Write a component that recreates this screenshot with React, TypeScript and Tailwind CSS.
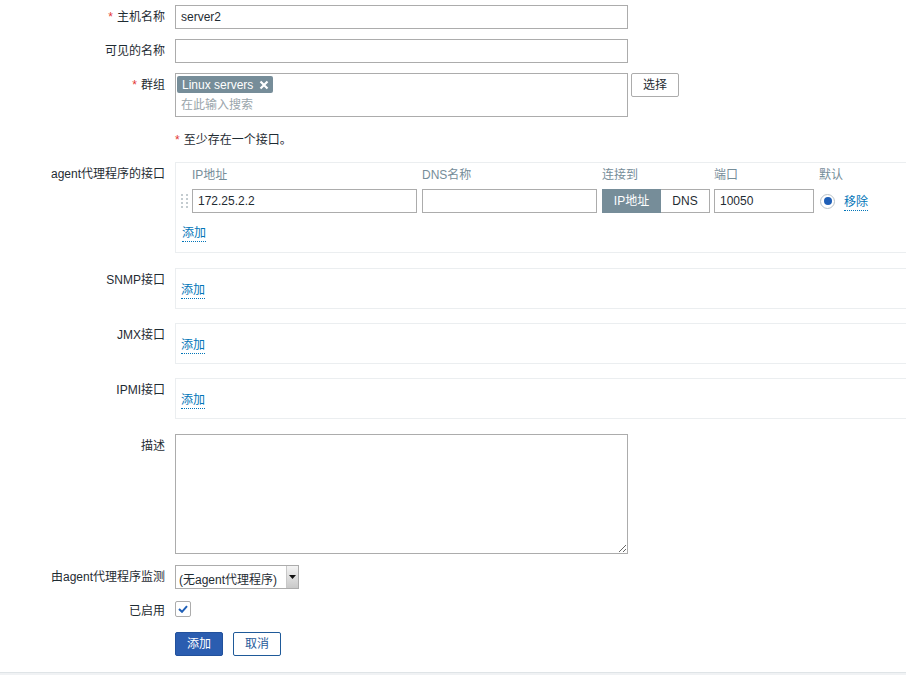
import { ReactNode } from 'react'

const font = { fontFamily: '"Liberation Sans", Arial, "Noto Sans CJK SC", sans-serif' }

function Req() {
  return <span className="mr-[4px] text-[#e33734]">*</span>
}

function Row({
  label,
  required,
  className,
  labelClass,
  children,
}: {
  label?: ReactNode
  required?: boolean
  className?: string
  labelClass?: string
  children: ReactNode
}) {
  return (
    <div className={`flex items-start ${className ?? ''}`}>
      <div
        className={`w-[165px] shrink-0 text-right text-[12px] leading-[14px] text-[#1f2c33] ${labelClass ?? 'pt-[5px]'}`}
      >
        {required && <Req />}
        {label}
      </div>
      <div className="ml-[10px] min-w-0">{children}</div>
    </div>
  )
}

function AddLink({ children = '添加' }: { children?: ReactNode }) {
  return (
    <span className="border-b border-dotted border-[#0275b8] pb-[1px] text-[12px] leading-[14px] text-[#0275b8]">
      {children}
    </span>
  )
}

function TextInput({ value, w }: { value?: string; w: string }) {
  return (
    <div
      className={`${w} flex h-[24px] items-center border border-[#acacac] bg-white px-[5px] text-[12px] text-[#1f2c33]`}
    >
      {value}
    </div>
  )
}

function DragHandle() {
  return (
    <div className="grid w-[7px] grid-cols-2 gap-x-[3px] gap-y-[2px]">
      {Array.from({ length: 8 }).map((_, i) => (
        <span key={i} className="h-[2px] w-[2px] bg-[#c4ccd0]" />
      ))}
    </div>
  )
}

function EmptyBox() {
  return (
    <div className="h-[41px] w-[740px] border border-[#ebeef0] pl-[5px] pt-[8px]">
      <AddLink />
    </div>
  )
}

export default function App() {
  return (
    <div className="min-h-[675px] w-full overflow-hidden bg-white" style={font}>
      <div className="flex flex-col pt-[5px]">
        <Row label="主机名称" required>
          <TextInput value="server2" w="w-[453px]" />
        </Row>

        <Row label="可见的名称" className="mt-[10px]">
          <TextInput w="w-[453px]" />
        </Row>

        <Row label="群组" required className="mt-[10px]">
          <div className="flex items-start gap-[3px]">
            <div className="h-[44px] w-[453px] border border-[#acacac] bg-white px-[1px] pt-[2px]">
              <div className="flex">
                <span className="flex h-[17px] items-center gap-[6px] rounded-[2px] bg-[#768d99] pl-[5px] pr-[4px] text-[12px] text-white">
                  Linux servers
                  <svg width="10" height="10" viewBox="0 0 10 10">
                    <path d="M1.5 1.5 L8.5 8.5 M8.5 1.5 L1.5 8.5" stroke="white" strokeWidth="2.2" />
                  </svg>
                </span>
              </div>
              <div className="mt-[5px] pl-[4px] text-[12px] leading-[14px] text-[#9aa5ab]">在此输入搜索</div>
            </div>
            <button className="h-[24px] w-[48px] rounded-[2px] border border-[#acacac] bg-white text-[12px] text-[#1f2c33]">
              选择
            </button>
          </div>
        </Row>

        <Row className="mt-[16px]">
          <div className="text-[12px] leading-[14px] text-[#1f2c33]">
            <Req />
            至少存在一个接口。
          </div>
        </Row>

        <Row label="agent代理程序的接口" className="mt-[15px]">
          <div className="h-[91px] w-[740px] border border-[#ebeef0] pl-[5px] pt-[5px]">
            <div className="flex gap-[5px] pl-[11px] text-[12px] leading-[14px] text-[#768d99]">
              <span className="w-[225px]">IP地址</span>
              <span className="w-[175px]">DNS名称</span>
              <span className="w-[107px]">连接到</span>
              <span className="w-[100px]">端口</span>
              <span>默认</span>
            </div>
            <div className="mt-[7px] flex items-center">
              <DragHandle />
              <div className="ml-[4px] flex items-center gap-[5px]">
                <TextInput value="172.25.2.2" w="w-[225px]" />
                <TextInput w="w-[175px]" />
                <div className="flex h-[24px] text-[12px]">
                  <span className="flex w-[59px] items-center justify-center border border-[#768d99] bg-[#768d99] text-white">
                    IP地址
                  </span>
                  <span className="flex w-[49px] items-center justify-center border border-l-0 border-[#acacac] bg-white text-[#1f2c33]">
                    DNS
                  </span>
                </div>
                <div className="-ml-[1px]">
                  <TextInput value="10050" w="w-[100px]" />
                </div>
                <span className="ml-[1px] flex h-[15px] w-[15px] items-center justify-center rounded-full border border-[#b8c2c8] bg-white">
                  <span className="h-[8px] w-[8px] rounded-full bg-[#1f5fb7]" />
                </span>
                <span className="ml-[4px]">
                  <AddLink>移除</AddLink>
                </span>
              </div>
            </div>
            <div className="mt-[7px] pl-[1px]">
              <AddLink />
            </div>
          </div>
        </Row>

        <Row label="SNMP接口" className="mt-[15px]">
          <EmptyBox />
        </Row>
        <Row label="JMX接口" className="mt-[14px]">
          <EmptyBox />
        </Row>
        <Row label="IPMI接口" className="mt-[14px]">
          <EmptyBox />
        </Row>

        <Row label="描述" className="mt-[15px]">
          <textarea className="block h-[120px] w-[453px] resize border border-[#acacac] bg-white" />
        </Row>

        <Row label="由agent代理程序监测" className="mt-[11px]">
          <div className="flex h-[24px] w-[124px] border border-[#acacac] bg-white">
            <div className="h-full flex-1 overflow-hidden pl-[3px] pt-[5px] text-[12px] leading-[18px] text-[#1f2c33]">
              (无agent代理程序)
            </div>
            <div className="flex w-[12px] items-center justify-center border-l border-[#c8c8c8] bg-gradient-to-b from-[#f4f4f4] to-[#c9c9c9]">
              <svg width="7" height="4" viewBox="0 0 7 4">
                <path d="M0 0 H7 L3.5 4 Z" fill="#111" />
              </svg>
            </div>
          </div>
        </Row>

        <Row label="已启用" className="mt-[12px]" labelClass="pt-[3px]">
          <div className="flex h-[16px] w-[16px] items-center justify-center rounded-[2px] border border-[#acacac] bg-white">
            <svg width="10" height="8" viewBox="0 0 10 8">
              <path d="M1 4 L4 6.8 L9 1.2" stroke="#1f5fb7" strokeWidth="2" fill="none" />
            </svg>
          </div>
        </Row>

        <Row className="mt-[14px]">
          <div className="flex gap-[10px]">
            <button className="h-[24px] w-[48px] rounded-[2px] border border-[#22519c] bg-[#2b5db0] text-[12px] text-white">
              添加
            </button>
            <button className="h-[24px] w-[48px] rounded-[2px] border border-[#1f5a99] bg-white text-[12px] text-[#1f5a99]">
              取消
            </button>
          </div>
        </Row>
      </div>
      <div className="mt-[16px] h-[10px] border-t border-[#dfe4e7] bg-[#f0f2f4]" />
    </div>
  )
}
